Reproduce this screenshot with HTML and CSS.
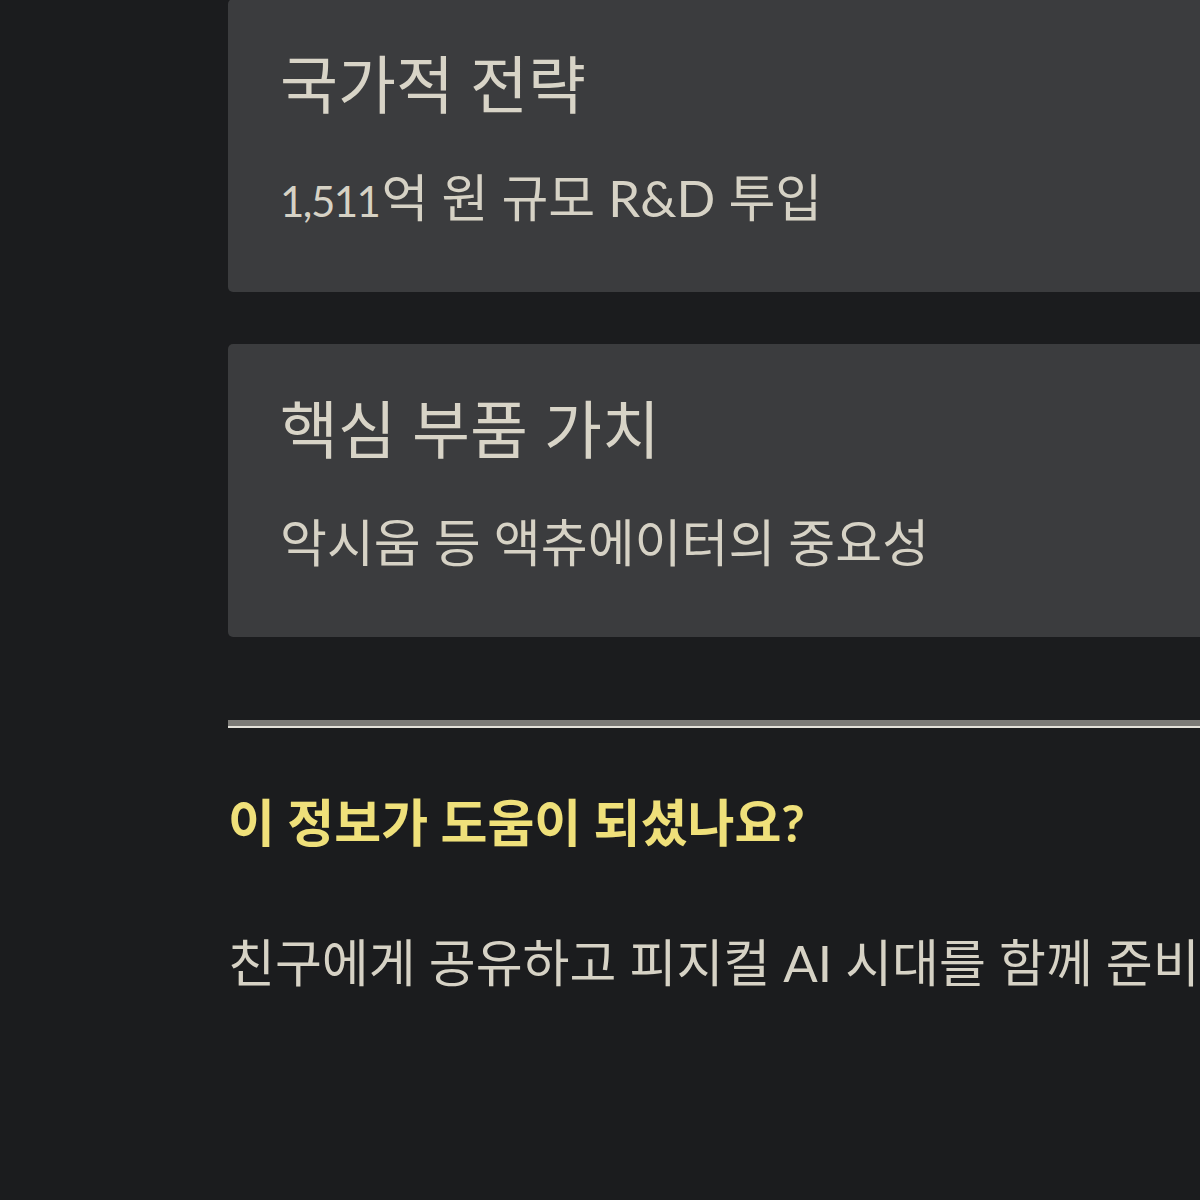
FILE: index.html
```html
<!DOCTYPE html>
<html lang="ko">
<head>
<meta charset="utf-8">
<title>피지컬 AI</title>
<link rel="stylesheet" href="styles.css">
</head>
<body>
<main class="page">
  <section class="cards">
    <article class="card">
      <h3 class="card-title">국가적 전략</h3>
      <p class="card-text"><span class="num">1,511</span>억 원 규모 R&amp;D 투입</p>
    </article>
    <article class="card">
      <h3 class="card-title">핵심 부품 가치</h3>
      <p class="card-text">악시움 등 액츄에이터의 중요성</p>
    </article>
  </section>
  <hr class="divider">
  <section class="share">
    <h2 class="share-title">이 정보가 도움이 되셨나요?</h2>
    <p class="share-text">친구에게 공유하고 피지컬 AI 시대를 함께 준비</p>
  </section>
</main>
</body>
</html>
```
FILE: styles.css
```css
html, body {
  margin: 0;
  padding: 0;
  background: #1b1c1e;
  overflow: hidden;
}
body {
  font-family: "Lato", "Noto Sans CJK KR", sans-serif;
  color: #d6d2c5;
}
.page {
  width: 1400px;
  padding-left: 228px;
  box-sizing: border-box;
  display: flex;
  flex-direction: column;
}
.cards {
  display: flex;
  flex-direction: column;
  gap: 52px;
  margin-top: -1px;
}
.card {
  background: #3b3c3e;
  border-radius: 5px;
  padding: 40px 52px 0;
  height: 293px;
  box-sizing: border-box;
}
.card-title {
  margin: 0;
  font-size: 63px;
  font-weight: 400;
  line-height: 90px;
  color: #d8d4c7;
  white-space: nowrap;
}
.card-text {
  margin: 31px 0 0;
  font-size: 51px;
  font-weight: 400;
  line-height: 75px;
  color: #d6d2c5;
  white-space: nowrap;
}
.num {
  font-size: 42px;
  letter-spacing: -1.5px;
  margin-right: 2px;
}
.divider {
  margin: 83px 0 0;
  height: 0;
  border: 0;
  border-top: 6px solid #7c7b77;
  border-bottom: 2px solid #e4e2da;
}
.share {
  display: flex;
  flex-direction: column;
}
.share-title {
  margin: 60px 0 0;
  font-size: 51px;
  font-weight: 700;
  line-height: 70px;
  color: #efe07a;
  white-space: nowrap;
}
.share-text {
  margin: 70px 0 0;
  font-size: 51px;
  font-weight: 400;
  line-height: 70px;
  white-space: nowrap;
}
```
